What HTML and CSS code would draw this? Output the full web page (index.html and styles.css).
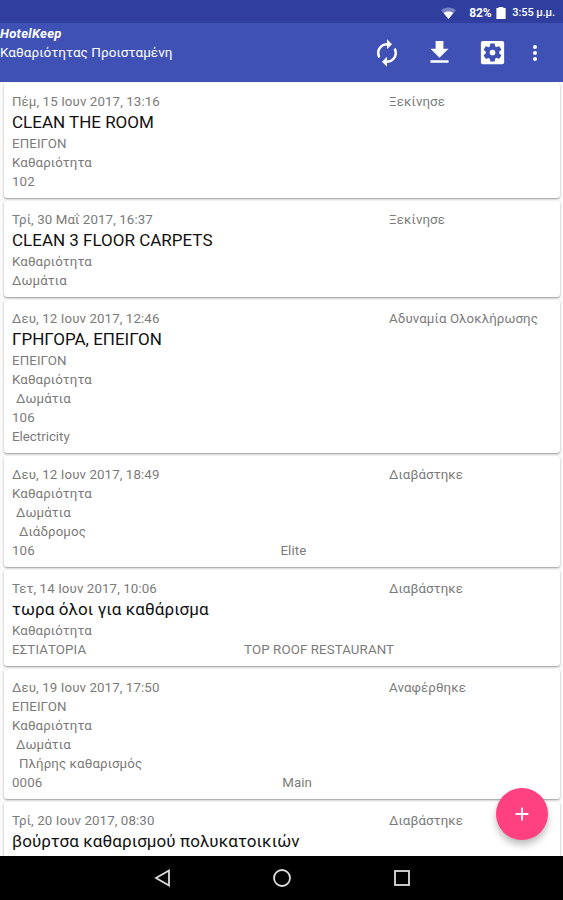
FILE: index.html
```html
<!DOCTYPE html>
<html lang="el">
<head>
  <meta charset="UTF-8" />
  <meta name="viewport" content="width=device-width, initial-scale=1.0" />
  <title>HotelKeep</title>

  <link rel="stylesheet" href="styles.css">
</head>
<body>

  <div class="status-bar">
    <svg class="wifi" viewBox="0 0 16 13">
      <path class="faint" d="M0 3.5C4.500-.5 11.500-.5 16 3.500L8 13z" />
      <path d="M2.800 6.500C5.500 4.300 10.500 4.300 13.200 6.500L8 13z" />
    </svg>
    <span class="percent">82%</span>
    <svg class="battery" viewBox="0 0 10 13">
      <path d="M2.500 0h5v1.200H10V13H0V1.200h2.500z" />
    </svg>
    <span class="clock">3:55 μ.μ.</span>
  </div>

  <header class="toolbar">
    <div class="titles">
      <h1>HotelKeep</h1>
      <p>Καθαριότητας Προισταμένη</p>
    </div>
    <div class="actions">
      <svg class="renew" viewBox="0 0 24 24"><path d="M12 6v3l4-4-4-4v3c-4.420 0-8 3.580-8 8 0 1.570.46 3.030 1.240 4.260L6.700 14.800c-.45-.83-.7-1.790-.7-2.800 0-3.310 2.690-6 6-6zm6.760 1.740L17.300 9.200c.44.84.7 1.790.7 2.800 0 3.310-2.690 6-6 6v-3l-4 4 4 4v-3c4.420 0 8-3.580 8-8 0-1.570-.46-3.030-1.240-4.260z" /></svg>
      <svg class="download" viewBox="0 0 24 24"><path d="M19 9h-4V3H9v6H5l7 7 7-7zM5 18v2h14v-2H5z" /></svg>
      <svg class="settings" viewBox="0 0 24 24">
        <rect x="3" y="3" width="18" height="18" rx="1.500" />
        <path class="gear" d="M17.250 12c0 .23-.02.46-.05.68l1.480 1.160c.13.11.17.3.08.45l-1.400 2.420c-.09.15-.27.21-.43.15l-1.740-.7c-.36.28-.76.51-1.180.69l-.26 1.850c-.03.17-.18.3-.35.3h-2.800c-.17 0-.32-.13-.35-.29l-.26-1.850c-.43-.18-.82-.41-1.180-.69l-1.740.7c-.16.06-.34 0-.43-.15l-1.400-2.420c-.09-.15-.05-.34.08-.45l1.480-1.160c-.03-.23-.05-.46-.05-.69s.02-.46.05-.68l-1.480-1.160c-.13-.11-.17-.3-.08-.45l1.400-2.420c.09-.15.27-.21.43-.15l1.740.7c.36-.28.76-.51 1.180-.69l.26-1.850c.03-.17.18-.3.35-.3h2.800c.17 0 .32.13.35.29l.26 1.850c.43.18.82.41 1.180.69l1.740-.7c.16-.06.34 0 .43.15l1.400 2.420c.09.15.05.34-.08.45l-1.480 1.160c.03.23.05.46.05.69z" />
        <circle cx="12" cy="12" r="2.200" />
      </svg>
      <svg class="more" viewBox="0 0 8 24"><circle cx="4" cy="6" r="2" /><circle cx="4" cy="12" r="2" /><circle cx="4" cy="18" r="2" /></svg>
    </div>
  </header>

  <main class="list">

    <div class="card">
      <div class="head"><span class="date">Πέμ, 15 Ιουν 2017, 13:16</span><span>Ξεκίνησε</span></div>
      <h2>CLEAN THE ROOM</h2>
      <p>ΕΠΕΙΓΟΝ</p>
      <p>Καθαριότητα</p>
      <p>102</p>
    </div>

    <div class="card">
      <div class="head"><span class="date">Τρί, 30 Μαΐ 2017, 16:37</span><span>Ξεκίνησε</span></div>
      <h2>CLEAN 3 FLOOR CARPETS</h2>
      <p>Καθαριότητα</p>
      <p>Δωμάτια</p>
    </div>

    <div class="card">
      <div class="head"><span class="date">Δευ, 12 Ιουν 2017, 12:46</span><span>Αδυναμία Ολοκλήρωσης</span></div>
      <h2>ΓΡΗΓΟΡΑ, ΕΠΕΙΓΟΝ</h2>
      <p>ΕΠΕΙΓΟΝ</p>
      <p>Καθαριότητα</p>
      <p class="sub">Δωμάτια</p>
      <p>106</p>
      <p class="latin">Electricity</p>
    </div>

    <div class="card">
      <div class="head"><span class="date">Δευ, 12 Ιουν 2017, 18:49</span><span>Διαβάστηκε</span></div>
      <p>Καθαριότητα</p>
      <p class="sub">Δωμάτια</p>
      <p class="subsub">Διάδρομος</p>
      <div class="place"><span>106</span><span class="area">Elite</span></div>
    </div>

    <div class="card">
      <div class="head"><span class="date">Τετ, 14 Ιουν 2017, 10:06</span><span>Διαβάστηκε</span></div>
      <h2 class="lower">τωρα όλοι για καθάρισμα</h2>
      <p>Καθαριότητα</p>
      <div class="place"><span>ΕΣΤΙΑΤΟΡΙΑ</span><span class="area">TOP ROOF RESTAURANT</span></div>
    </div>

    <div class="card">
      <div class="head"><span class="date">Δευ, 19 Ιουν 2017, 17:50</span><span>Αναφέρθηκε</span></div>
      <p>ΕΠΕΙΓΟΝ</p>
      <p>Καθαριότητα</p>
      <p class="sub">Δωμάτια</p>
      <p class="subsub">Πλήρης καθαρισμός</p>
      <div class="place"><span>0006</span><span class="area">Main</span></div>
    </div>

    <div class="card">
      <div class="head"><span class="date">Τρί, 20 Ιουν 2017, 08:30</span><span>Διαβάστηκε</span></div>
      <h2 class="lower">βούρτσα καθαρισμού πολυκατοικιών</h2>
    </div>

  </main>

  <button class="fab" aria-label="Προσθήκη">
    <svg viewBox="0 0 14 14"><path d="M7 .5v13M.5 7h13" /></svg>
  </button>

  <nav class="nav-bar">
    <svg viewBox="0 0 20 20"><path d="M17 2.500v15L4 10z" /></svg>
    <svg viewBox="0 0 20 20"><circle cx="10" cy="10" r="8" /></svg>
    <svg viewBox="0 0 20 20"><rect x="3" y="3" width="14" height="14" /></svg>
  </nav>

</body>
</html>
```

FILE: styles.css
```css
* {
  box-sizing: border-box;
}

body {
  display: flex;
  flex-direction: column;
  height: 900px;
  margin: 0;
  overflow: hidden;
  font-family: Roboto, "Liberation Sans", sans-serif;
  background: #fafafa;
  color: #7b7b7b;
}

h1,
h2,
p {
  margin: 0;
  font-weight: 400;
}

/* Status bar */
.status-bar {
  display: flex;
  flex: none;
  align-items: center;
  justify-content: flex-end;
  height: 23px;
  padding: 2px 8px 0 0;
  background: #303f9f;
  color: #fff;
  fill: #fff;
  font-size: 12px;
  font-weight: 500;
}

.wifi {
  width: 15px;
  height: 12px;
  margin-right: 13px;
}

.wifi .faint {
  opacity: 0.35;
}

.percent {
  font-weight: 700;
  letter-spacing: -0.2px;
}

.battery {
  width: 10px;
  height: 12px;
  margin: 0 6px 0 5px;
}

.clock {
  font-size: 11px;
  letter-spacing: -0.1px;
}

/* Toolbar */
.toolbar {
  display: flex;
  flex: none;
  justify-content: space-between;
  height: 59px;
  background: #3f51b5;
  color: #fff;
}

.titles {
  padding-top: 1px;
  white-space: nowrap;
}

.titles h1 {
  font-size: 13px;
  font-style: italic;
  font-weight: 700;
  line-height: 19px;
  letter-spacing: 0.3px;
}

.titles p {
  font-size: 13.5px;
  line-height: 19px;
  letter-spacing: 0.05px;
}

.actions {
  display: flex;
  align-items: center;
  padding-right: 24px;
  fill: #fff;
}

.actions svg {
  width: 31px;
  height: 31px;
}

.actions .renew {
  width: 30px;
  height: 30px;
  margin-right: 22px;
}

.actions .download {
  margin-right: 22px;
}

.actions .more {
  width: 8px;
  height: 24px;
  margin-left: 23px;
}

.actions .gear {
  fill: #3f51b5;
}

/* Task list */
.list {
  flex: 1;
  min-height: 0;
  padding: 1px 3px 0 4px;
  overflow: hidden;
}

.card {
  margin-bottom: 3px;
  padding: 9px 8px 7px;
  background: #fff;
  border-radius: 3px;
  box-shadow: 0 1px 2px rgba(0, 0, 0, 0.4);
  font-size: 13.3px;
  line-height: 19px;
  letter-spacing: 0.1px;
}

.card h2 {
  color: #111;
  font-size: 17px;
  line-height: 23px;
  letter-spacing: 0;
}

.card h2.lower {
  letter-spacing: 0.08px;
}

/* the cut-off card runs on below the list */
.card:last-child {
  padding-bottom: 40px;
}

.head,
.place {
  display: flex;
}

.date {
  width: 377px;
}

.sub {
  padding-left: 4px;
}

.subsub {
  padding-left: 7px;
}

.area {
  flex: 1;
  text-align: center;
}

.latin {
  letter-spacing: 0;
}

/* Floating button */
.fab {
  position: absolute;
  top: 788px;
  left: 496px;
  display: flex;
  align-items: center;
  justify-content: center;
  width: 52px;
  height: 52px;
  padding: 0;
  background: #ff4081;
  border: none;
  border-radius: 50%;
  box-shadow: 0 5px 7px rgba(0, 0, 0, 0.25);
}

.fab svg {
  width: 14px;
  height: 14px;
  stroke: #fff;
  stroke-width: 1.8;
}

/* Navigation bar */
.nav-bar {
  display: flex;
  flex: none;
  align-items: center;
  justify-content: center;
  gap: 100px;
  height: 44px;
  background: #000;
}

.nav-bar svg {
  width: 20px;
  height: 20px;
  fill: none;
  stroke: #ddd;
  stroke-width: 1.8;
}
```
